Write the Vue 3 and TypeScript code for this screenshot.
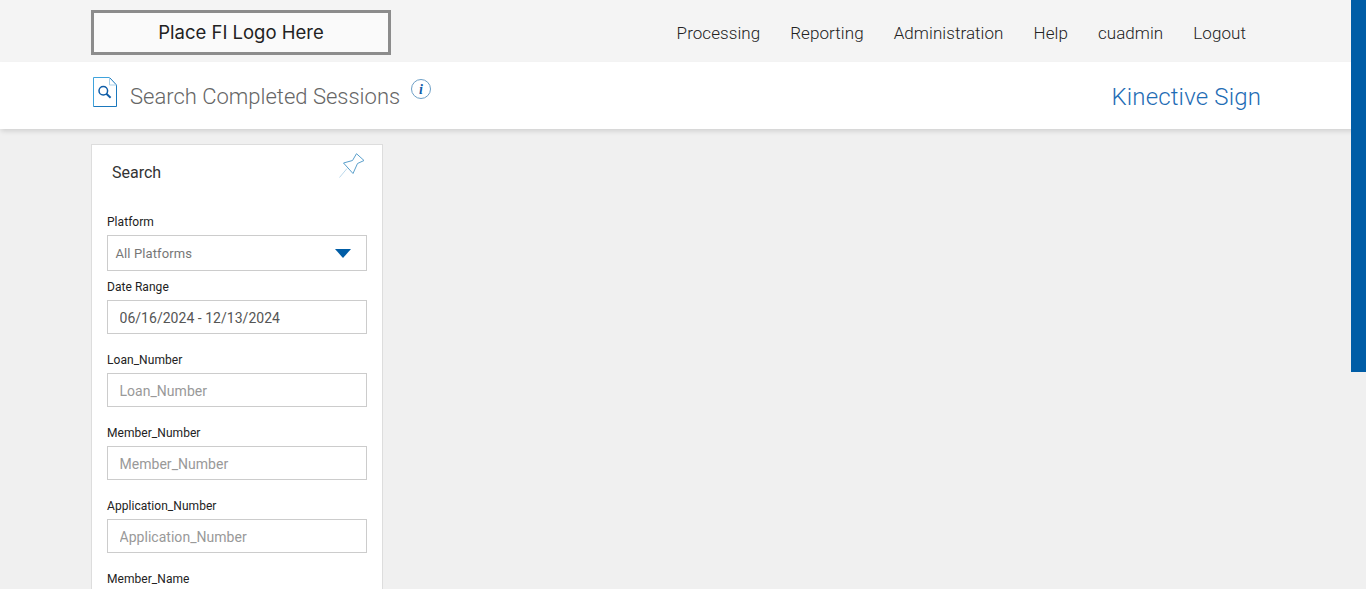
<template>
  <div class="page">
    <header class="top">
      <div class="logo">Place FI Logo Here</div>
      <nav class="nav">
        <a v-for="item in navItems" :key="item">{{ item }}</a>
      </nav>
    </header>

    <div class="subhead">
      <svg class="doc-icon" width="24" height="30" viewBox="0 0 24 30" fill="none">
        <path d="M.5 29.5V.5H16.5" stroke="#3fa3dc" />
        <path d="M16.5 .5L23.5 8V29.5H.5" stroke="#1b78bd" />
        <path d="M16.5 .5V8H23.5" stroke="#a9cfe8" />
        <circle cx="10.3" cy="13.7" r="4.3" stroke="#0f5da8" stroke-width="1.5" />
        <path d="M13.4 16.8L17.6 20.8" stroke="#0f5da8" stroke-width="1.9" />
      </svg>
      <h1>Search Completed Sessions</h1>
      <svg class="info-icon" width="20" height="20" viewBox="0 0 20 20" fill="none">
        <circle cx="10" cy="10" r="9.5" stroke="#6d9fc6" />
        <text x="10" y="14.5" text-anchor="middle">i</text>
      </svg>
      <div class="brand">Kinective Sign</div>
    </div>

    <main class="content">
      <section class="card">
        <div class="card-head">
          <h2>Search</h2>
          <svg class="pin" width="26" height="26" viewBox="0 0 26 26" fill="none">
            <path d="M.5 24.5L8 15.5" stroke="#bcd9eb" />
            <path d="M4.5 10L13.5 7.5L17.5 .7L25 7.5L18.5 10.5L14 20.5Z" stroke="#5a9fcb" />
          </svg>
        </div>

        <div class="field tight">
          <label>Platform</label>
          <div class="select">
            <span>All Platforms</span>
            <i class="caret"></i>
          </div>
        </div>

        <div class="field">
          <label>Date Range</label>
          <input type="text" value="06/16/2024 - 12/13/2024" />
        </div>

        <div v-for="name in textFields" :key="name" class="field">
          <label>{{ name }}</label>
          <input type="text" :placeholder="name" />
        </div>

        <div class="field">
          <label>Member_Name</label>
          <input type="text" placeholder="Member_Name" />
        </div>
      </section>
    </main>

    <div class="scroll-thumb"></div>
  </div>
</template>

<script setup lang="ts">
const navItems: string[] = ['Processing', 'Reporting', 'Administration', 'Help', 'cuadmin', 'Logout']
const textFields: string[] = ['Loan_Number', 'Member_Number', 'Application_Number']
</script>

<style>
html, body { height: 100%; overflow: hidden; background: #f0f0f0; }
</style>

<style scoped>
.page { position: relative; height: 589px; overflow: hidden; background: #f0f0f0; font-family: Roboto, "Liberation Sans", sans-serif; }

.top { display: flex; align-items: flex-start; height: 62px; padding: 10px 120px 0 91px; box-sizing: border-box; background: #f4f4f4; }
.logo { width: 300px; height: 45px; box-sizing: border-box; border: 3px solid #8c8c8c; background: #fafafa; color: #222; font-family: Inter, Lato, sans-serif; font-size: 18.5px; font-weight: 400; line-height: 39px; text-align: center; }
.nav { display: flex; gap: 30px; margin-left: auto; padding-top: 12px; }
.nav a { color: #222; font-size: 17px; font-weight: 300; line-height: 22px; letter-spacing: .07px; }

.subhead { position: relative; display: flex; align-items: flex-start; height: 67px; padding: 15px 105px 0 93px; box-sizing: border-box; background: #fff; box-shadow: 0 3px 5px -1px rgba(0, 0, 0, .14); }
.doc-icon { flex: none; }
h1 { margin: 4px 11px 0 13px; color: #666; font-size: 22px; font-weight: 300; line-height: 32px; }
.info-icon { flex: none; margin-top: 2px; }
.info-icon text { fill: #0f5da8; font-family: "Liberation Serif", serif; font-size: 14px; font-style: italic; font-weight: 700; }
.brand { margin-left: auto; margin-top: 4px; color: #1f6db5; font-size: 24px; font-weight: 300; line-height: 32px; letter-spacing: .15px; }

.content { padding: 15px 0 0 91px; }
.card { width: 292px; box-sizing: border-box; padding: 0 15px; background: #fff; border: 1px solid #ddd; }
.card-head { display: flex; justify-content: space-between; height: 70px; padding: 8px 2px 0 5px; box-sizing: border-box; }
h2 { margin: 10px 0 0; color: #333; font-size: 16px; font-weight: 400; line-height: 20px; }

.field { margin-bottom: 19px; }
.field.tight { margin-bottom: 9px; }
label { display: block; margin-bottom: 6px; color: #222; font-size: 12px; line-height: 14px; letter-spacing: .05px; }
input { display: block; width: 260px; height: 34px; box-sizing: border-box; padding: 2px 12px 0 11.5px; border: 1px solid #ccc; border-radius: 0; outline: none; background: #fff; color: #555; font-family: inherit; font-size: 14px; letter-spacing: .03px; }
input::placeholder { color: #999; opacity: 1; }
.select { display: flex; align-items: center; justify-content: space-between; width: 260px; height: 36px; box-sizing: border-box; padding: 0 15px 0 7.5px; border: 1px solid #ccc; color: #777; font-size: 13px; letter-spacing: .1px; }
.caret { width: 0; height: 0; border-left: 8.5px solid transparent; border-right: 8.5px solid transparent; border-top: 9px solid #005da6; }

.scroll-thumb { position: absolute; top: 0; right: 0; width: 15px; height: 372px; background: #005da6; }
</style>
